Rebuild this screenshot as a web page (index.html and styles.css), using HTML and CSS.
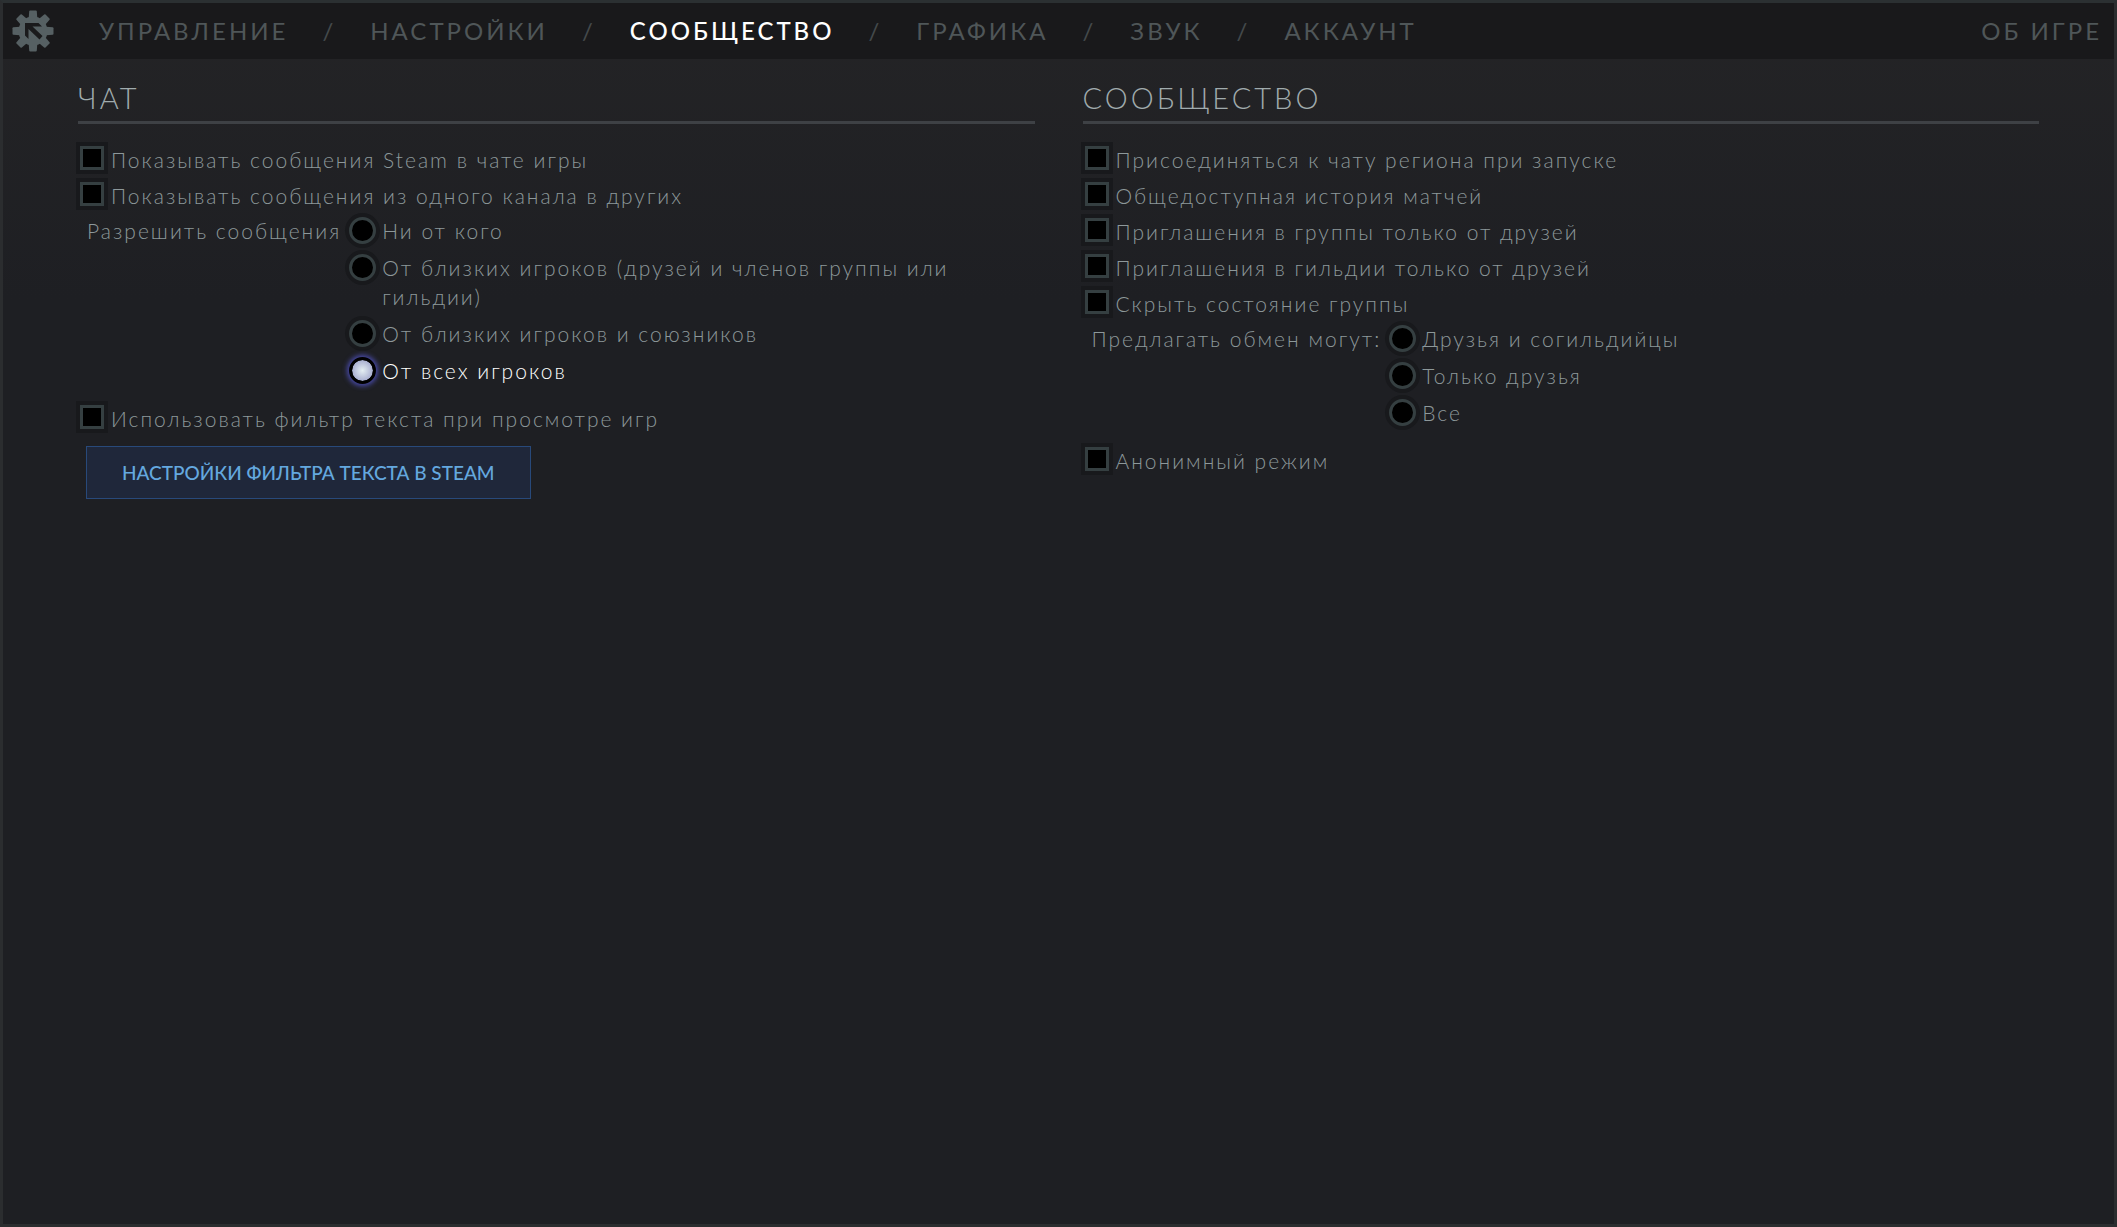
FILE: index.html
```html
<!DOCTYPE html>
<html lang="ru">
<head>
    <meta charset="UTF-8">
    <meta name="viewport" content="width=device-width, initial-scale=1.0">
    <title>Настройки</title>
    <link rel="stylesheet" href="styles.css">
</head>
<body>
    <header class="topbar">
        <svg class="gear" viewBox="0 0 42 42">
            <g fill="#566063">
                <circle cx="21" cy="21" r="14.5"/>
                <path id="tooth" d="M17.2 1.4 Q17.3 0.5 18.2 0.5 H23.8 Q24.7 0.5 24.8 1.4 L25.3 8 H16.7 Z"/>
                <use href="#tooth" transform="rotate(45 21 21)"/>
                <use href="#tooth" transform="rotate(90 21 21)"/>
                <use href="#tooth" transform="rotate(135 21 21)"/>
                <use href="#tooth" transform="rotate(180 21 21)"/>
                <use href="#tooth" transform="rotate(225 21 21)"/>
                <use href="#tooth" transform="rotate(270 21 21)"/>
                <use href="#tooth" transform="rotate(315 21 21)"/>
            </g>
            <path fill="#1a1a1c" d="M13 13 H26.5 L30 16.5 H20.5 L30.5 26 L27.5 29.5 L16.5 19 V29 L13 25.5 Z"/>
        </svg>
        <nav class="tabs">
            <a href="#">УПРАВЛЕНИЕ</a>
            <span class="slash">/</span>
            <a href="#">НАСТРОЙКИ</a>
            <span class="slash">/</span>
            <a href="#" class="active">СООБЩЕСТВО</a>
            <span class="slash">/</span>
            <a href="#">ГРАФИКА</a>
            <span class="slash">/</span>
            <a href="#">ЗВУК</a>
            <span class="slash">/</span>
            <a href="#">АККАУНТ</a>
            <a href="#" class="about">ОБ ИГРЕ</a>
        </nav>
    </header>

    <main class="settings">
        <section class="column">
            <h2>ЧАТ</h2>
            <label class="check"><input type="checkbox"><span>Показывать сообщения Steam в чате игры</span></label>
            <label class="check"><input type="checkbox"><span>Показывать сообщения из одного канала в других</span></label>
            <div class="group" role="radiogroup" aria-labelledby="messages">
                <div class="group-name" id="messages">Разрешить сообщения</div>
                <div class="options">
                    <label class="radio"><input type="radio" name="messages"><span>Ни от кого</span></label>
                    <label class="radio"><input type="radio" name="messages"><span>От близких игроков (друзей и членов группы или гильдии)</span></label>
                    <label class="radio"><input type="radio" name="messages"><span>От близких игроков и союзников</span></label>
                    <label class="radio"><input type="radio" name="messages" checked><span>От всех игроков</span></label>
                </div>
            </div>
            <label class="check"><input type="checkbox"><span>Использовать фильтр текста при просмотре игр</span></label>
            <button class="button" type="button">НАСТРОЙКИ ФИЛЬТРА ТЕКСТА В STEAM</button>
        </section>

        <section class="column">
            <h2>СООБЩЕСТВО</h2>
            <label class="check"><input type="checkbox"><span>Присоединяться к чату региона при запуске</span></label>
            <label class="check"><input type="checkbox"><span>Общедоступная история матчей</span></label>
            <label class="check"><input type="checkbox"><span>Приглашения в группы только от друзей</span></label>
            <label class="check"><input type="checkbox"><span>Приглашения в гильдии только от друзей</span></label>
            <label class="check"><input type="checkbox"><span>Скрыть состояние группы</span></label>
            <div class="group" role="radiogroup" aria-labelledby="trade">
                <div class="group-name" id="trade">Предлагать обмен могут:</div>
                <div class="options">
                    <label class="radio"><input type="radio" name="trade"><span>Друзья и согильдийцы</span></label>
                    <label class="radio"><input type="radio" name="trade"><span>Только друзья</span></label>
                    <label class="radio"><input type="radio" name="trade"><span>Все</span></label>
                </div>
            </div>
            <label class="check"><input type="checkbox"><span>Анонимный режим</span></label>
        </section>
    </main>
</body>
</html>
```

FILE: styles.css
```css
* {
    box-sizing: border-box;
}
body {
    margin: 0;
    min-height: 100vh;
    border: 3px solid #2b2d2f;
    border-top-color: #2b3032;
    background: #1e1f23 linear-gradient(#242426, #1e1f23 300px) no-repeat;
    color: #8d989a;
    font-family: Lato, "Open Sans", sans-serif;
    font-size: 21px;
    font-weight: 300;
    line-height: 29px;
    letter-spacing: 2px;
}
.topbar {
    display: flex;
    align-items: center;
    height: 56px;
    padding: 0 12px 0 9px;
    background: #19191b;
}
.gear {
    width: 42px;
    height: 42px;
    margin-right: 45px;
}
.tabs {
    display: flex;
    flex: 1;
    gap: 34px;
    padding-bottom: 2px;
    font-size: 24px;
    font-weight: 400;
    letter-spacing: 3px;
}
.tabs a {
    color: #4f5658;
    text-decoration: none;
}
.tabs .active {
    color: #fff;
    font-weight: 500;
}
.tabs .about {
    margin-left: auto;
}
.slash {
    color: #44494b;
}
.settings {
    display: grid;
    grid-template-columns: 1fr 1fr;
    gap: 48px;
    padding: 16px 75px;
}
h2 {
    margin: 0 0 16px;
    border-bottom: 3px solid #3e4145;
    color: #a0abad;
    font-size: 29px;
    font-weight: 300;
    line-height: 46px;
    letter-spacing: 3px;
}
.check {
    display: flex;
    align-items: center;
    gap: 7px;
    height: 36px;
    padding-left: 2px;
}
.check span {
    padding-top: 2px;
}
input {
    flex: none;
    appearance: none;
    width: 24px;
    height: 24px;
    margin: 0;
    border: 3px solid #353f41;
    background: #000;
    box-shadow: 0 0 0 4px #18191c;
}
.group {
    display: flex;
    gap: 8px;
    margin: 4px 0 14px;
    padding-left: 9px;
}
.group-name {
    flex: none;
}
.options {
    display: flex;
    flex-direction: column;
    gap: 8px;
}
.radio {
    display: flex;
    gap: 6px;
}
.radio input {
    width: 27px;
    height: 27px;
    margin-top: 1px;
    border-radius: 50%;
}
.radio input:checked {
    border-color: #000;
    background: radial-gradient(#e4eef2, #a9afd0 70%) padding-box, #000;
    box-shadow: 0 0 5px 2px #484aa8;
}
.radio input:checked + span {
    color: #fff;
}
.button {
    height: 53px;
    margin: 11px 0 0 8px;
    padding: 0 35px;
    border: 1px solid #28497a;
    background: #1f273a;
    color: #64a8df;
    font-family: inherit;
    font-size: 19px;
    font-weight: 500;
}
```
